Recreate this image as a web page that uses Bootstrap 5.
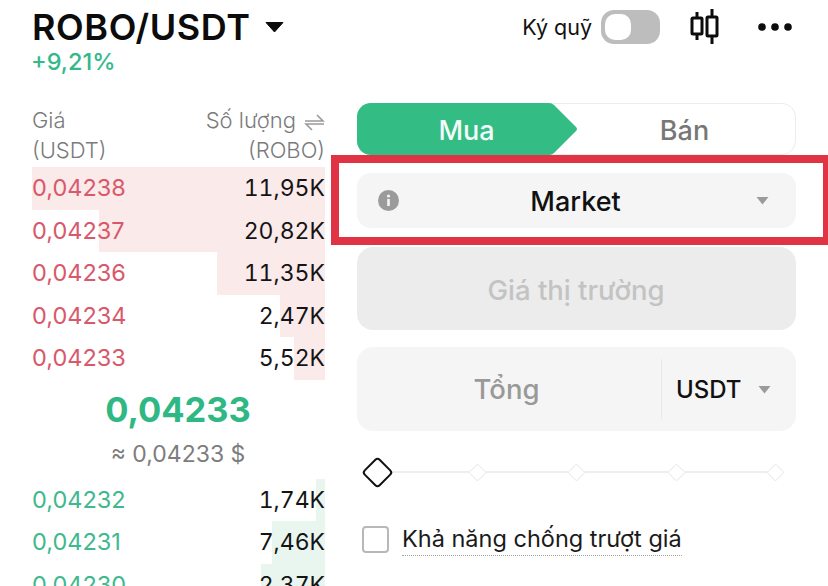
<!DOCTYPE html>
<html lang="vi">
<head>
<meta charset="UTF-8">
<meta name="viewport" content="width=device-width, initial-scale=1.0">
<title>ROBO/USDT</title>
<link href="https://cdn.jsdelivr.net/npm/bootstrap@5.3.0/dist/css/bootstrap.min.css" rel="stylesheet">
<style>
    html, body { height: 586px; overflow: hidden; }
    body { font-family: Inter, "Open Sans", sans-serif; background: #fff; color: #111; }
    .screen { width: 828px; height: 586px; overflow: hidden; }

    .top-bar { height: 46px; padding: 0 36px 0 32px; }
    .pair-name { font-size: 36px; font-weight: 600; line-height: 46px; letter-spacing: .6px; color: #0c0c0c; }
    .pair-caret { width: 19px; height: 12px; margin-left: 14px; }
    .change-pct { height: 53px; padding-left: 31px; font-size: 23.5px; line-height: 24px; font-weight: 500; color: #33b98a; }
    .margin-label { font-size: 21.5px; color: #111; margin-right: 9px; }
    .switch-box { width: 59px; height: 34px; border-radius: 13px; background: #bdbdbd; padding: 4px; margin-right: 30px; }
    .switch-knob { width: 26px; height: 26px; border-radius: 10px; background: #fff; }
    .candle-icon { width: 33px; height: 36px; margin-right: 35px; }
    .dots-icon { width: 34px; height: 8px; }

    .book-col { width: 293px; margin-left: 32px; margin-right: 32px; }
    .trade-col { width: 439px; position: relative; }

    .book-head { height: 64px; padding-top: 2px; font-size: 22px; line-height: 30px; color: #7b7b7b; font-weight: 300; }
    .swap-icon { width: 21px; height: 17px; margin-left: 8px; }
    .book-row { height: 42.5px; position: relative; font-size: 23.5px; line-height: 42.5px; font-weight: 400; }
    .depth-bar { position: absolute; top: 0; bottom: 0; right: 0; }
    .ask-row .depth-bar { background: #fbeaea; }
    .bid-row .depth-bar { background: #e9f6f0; }
    .book-price, .book-qty { position: relative; }
    .ask-row .book-price { color: #d9596c; }
    .bid-row .book-price { color: #3fb98d; }
    .book-qty { color: #141414; font-size: 23px; font-variant-numeric: tabular-nums; }
    .mid-block { height: 99px; text-align: center; padding-right: 1px; }
    .mid-price { font-size: 34.5px; font-weight: 700; line-height: 60px; color: #2fb883; }
    .mid-fiat { font-size: 23px; line-height: 28px; color: #7d7d7d; font-weight: 400; }

    .side-tabs { height: 52px; border: 1px solid #ececec; border-radius: 14px; position: relative; margin-bottom: 18px; }
    .buy-shape { position: absolute; left: -1px; top: -1px; width: 221px; height: 52px; }
    .side-buy, .side-sell { position: relative; font-size: 27px; font-weight: 500; line-height: 53px; }
    .side-buy { width: 217px; text-align: center; color: #f2fbf7; }
    .side-sell { flex: 1; text-align: center; color: #777; padding-right: 1px; }
    .type-box { height: 55px; background: #f5f5f5; border-radius: 14px; margin-bottom: 19px; padding: 0 26px 0 21px; }
    .type-name { font-size: 27px; font-weight: 500; color: #111; padding-top: 3px; margin-right: 3px; }
    .info-dot { width: 21px; height: 21px; }
    .small-caret { width: 15px; height: 9px; }
    .market-box { height: 83px; background: #ececec; border-radius: 16px; margin-bottom: 17px; font-size: 27.5px; line-height: 86px; text-align: center; color: #c3c3c3; font-weight: 500; padding-right: 1px; }
    .total-box { height: 84px; background: #f5f5f5; border-radius: 16px; margin-bottom: 26px; }
    .total-label { flex: 1; text-align: center; font-size: 27.5px; color: #999; font-weight: 500; padding: 2px 5px 0 0; }
    .unit-part { width: 135px; height: 60px; border-left: 1px solid #e8e8e8; padding-left: 14px; }
    .unit-name { font-size: 24px; font-weight: 500; color: #111; margin-right: 15px; padding-top: 2px; }

    .slider-row { height: 30px; padding: 0 12px 0 5px; margin-bottom: 36px; }
    .slider-big { width: 23px; height: 23px; flex: none; border: 2.5px solid #111; border-radius: 4px; transform: rotate(45deg); background: #fff; margin: 0 -3px 0 4px; }
    .slider-step { width: 13px; height: 13px; flex: none; border: 1.5px solid #ececec; border-radius: 2px; transform: rotate(45deg); background: #fff; margin: 0 2px; }
    .slider-line { flex: 1; height: 2px; background: #eeeeee; }

    .check-row { padding-left: 5px; }
    .check-box { width: 27px; height: 27px; border: 2px solid #b8b8b8; border-radius: 4px; margin-right: 13px; }
    .check-text { font-size: 23.5px; line-height: 32px; color: #1a1a1a; border-bottom: 1.5px dotted #a5a5a5; }

    /* annotation drawn over the screenshot */
    .red-frame { position: absolute; left: -26px; top: 52px; width: 500px; height: 90px; border: 8px solid #e03444; pointer-events: none; }
</style>
</head>
<body>
<div class="screen">
    <div class="top-bar d-flex align-items-center justify-content-between mt-1">
        <div class="d-flex align-items-center">
            <span class="pair-name">ROBO/USDT</span>
            <svg class="pair-caret" viewBox="0 0 19 12"><path d="M1 1.5h17L9.5 11z" fill="#0c0c0c" stroke="#0c0c0c" stroke-linejoin="round"/></svg>
        </div>
        <div class="d-flex align-items-center">
            <span class="margin-label">Ký quỹ</span>
            <div class="switch-box"><div class="switch-knob"></div></div>
            <svg class="candle-icon" viewBox="0 0 33 36" fill="none" stroke="#0c0c0c" stroke-width="3">
                <path d="M7 3v5M7 26v5M22 0v8M22 27v8"/>
                <rect x="2" y="9" width="10" height="16" rx="1"/>
                <rect x="17" y="8" width="10" height="19" rx="1"/>
            </svg>
            <svg class="dots-icon" viewBox="0 0 34 8" fill="#0c0c0c">
                <circle cx="4" cy="4" r="3.8"/><circle cx="17" cy="4" r="3.8"/><circle cx="30" cy="4" r="3.8"/>
            </svg>
        </div>
    </div>
    <div class="change-pct">+9,21%</div>

    <div class="d-flex">
        <div class="book-col">
            <div class="book-head d-flex justify-content-between">
                <div>Giá<br>(USDT)</div>
                <div class="text-end">Số lượng<svg class="swap-icon" viewBox="0 0 21 17" fill="none" stroke="#9a9a9a" stroke-width="1.6"><path d="M1 7h18L13 1M20 10H2l6 6"/></svg><br>(ROBO)</div>
            </div>

            <div class="book-row ask-row d-flex justify-content-between"><div class="depth-bar" style="width:100%"></div><span class="book-price">0,04238</span><span class="book-qty">11,95K</span></div>
            <div class="book-row ask-row d-flex justify-content-between"><div class="depth-bar" style="width:77%"></div><span class="book-price">0,04237</span><span class="book-qty">20,82K</span></div>
            <div class="book-row ask-row d-flex justify-content-between"><div class="depth-bar" style="width:37%"></div><span class="book-price">0,04236</span><span class="book-qty">11,35K</span></div>
            <div class="book-row ask-row d-flex justify-content-between"><div class="depth-bar" style="width:15.5%"></div><span class="book-price">0,04234</span><span class="book-qty">2,47K</span></div>
            <div class="book-row ask-row d-flex justify-content-between"><div class="depth-bar" style="width:10.5%"></div><span class="book-price">0,04233</span><span class="book-qty">5,52K</span></div>

            <div class="mid-block">
                <div class="mid-price">0,04233</div>
                <div class="mid-fiat">≈ 0,04233 $</div>
            </div>

            <div class="book-row bid-row d-flex justify-content-between"><div class="depth-bar" style="width:3%"></div><span class="book-price">0,04232</span><span class="book-qty">1,74K</span></div>
            <div class="book-row bid-row d-flex justify-content-between"><div class="depth-bar" style="width:18%"></div><span class="book-price">0,04231</span><span class="book-qty">7,46K</span></div>
            <div class="book-row bid-row d-flex justify-content-between"><div class="depth-bar" style="width:22%"></div><span class="book-price">0,04230</span><span class="book-qty">2,37K</span></div>
        </div>

        <div class="trade-col">
            <div class="side-tabs d-flex">
                <svg class="buy-shape" viewBox="0 0 221 52"><path d="M14 0H192Q195 0 197 2L219 24Q221 26 219 28L197 50Q195 52 192 52H14A14 14 0 0 1 0 38V14A14 14 0 0 1 14 0Z" fill="#33bd85"/></svg>
                <div class="side-buy">Mua</div>
                <div class="side-sell">Bán</div>
            </div>

            <div class="type-box d-flex align-items-center justify-content-between">
                <svg class="info-dot" viewBox="0 0 21 21"><circle cx="10.5" cy="10.5" r="10.5" fill="#9b9b9b"/><rect x="9.2" y="9" width="2.6" height="7" fill="#f5f5f5"/><circle cx="10.5" cy="6" r="1.6" fill="#f5f5f5"/></svg>
                <span class="type-name">Market</span>
                <svg class="small-caret" viewBox="0 0 14 9"><path d="M1 1h12L7 8.5z" fill="#9b9b9b"/></svg>
            </div>

            <div class="market-box">Giá thị trường</div>

            <div class="total-box d-flex align-items-center">
                <div class="total-label">Tổng</div>
                <div class="unit-part d-flex align-items-center">
                    <span class="unit-name">USDT</span>
                    <svg class="small-caret" viewBox="0 0 14 9"><path d="M1 1h12L7 8.5z" fill="#9b9b9b"/></svg>
                </div>
            </div>

            <div class="slider-row d-flex align-items-center">
                <div class="slider-big"></div>
                <div class="slider-line"></div>
                <div class="slider-step"></div>
                <div class="slider-line"></div>
                <div class="slider-step"></div>
                <div class="slider-line"></div>
                <div class="slider-step"></div>
                <div class="slider-line"></div>
                <div class="slider-step"></div>
            </div>

            <div class="check-row d-flex align-items-center">
                <div class="check-box"></div>
                <span class="check-text">Khả năng chống trượt giá</span>
            </div>

            <div class="red-frame"></div>
        </div>
    </div>
</div>
<script src="https://cdn.jsdelivr.net/npm/bootstrap@5.3.0/dist/js/bootstrap.bundle.min.js"></script>
</body>
</html>
